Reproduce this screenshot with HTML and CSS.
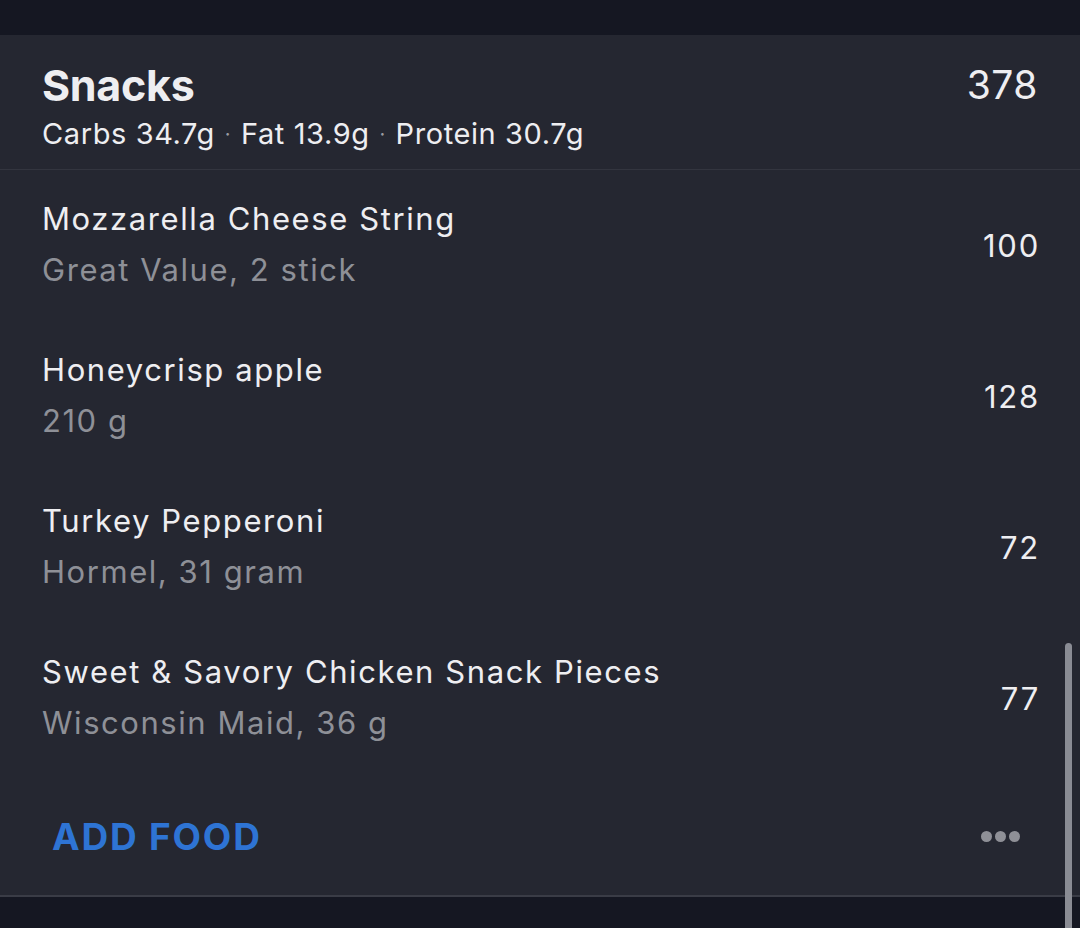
FILE: index.html
```html
<!DOCTYPE html>
<html>
<head>
<meta charset="utf-8">
<link rel="stylesheet" href="styles.css">
</head>
<body>
<div class="topbar"></div>
<section class="card">
  <header class="head">
    <div class="head-left">
      <h1 class="title">Snacks</h1>
      <div class="macros">Carbs 34.7g <span class="dot">·</span> Fat 13.9g <span class="dot">·</span> Protein 30.7g</div>
    </div>
    <div class="total">378</div>
  </header>
  <ul class="items">
    <li class="item">
      <div class="info"><div class="name">Mozzarella Cheese String</div><div class="sub">Great Value, 2 stick</div></div>
      <div class="cal">100</div>
    </li>
    <li class="item">
      <div class="info"><div class="name">Honeycrisp apple</div><div class="sub">210 g</div></div>
      <div class="cal">128</div>
    </li>
    <li class="item">
      <div class="info"><div class="name">Turkey Pepperoni</div><div class="sub">Hormel, 31 gram</div></div>
      <div class="cal">72</div>
    </li>
    <li class="item">
      <div class="info"><div class="name">Sweet &amp; Savory Chicken Snack Pieces</div><div class="sub">Wisconsin Maid, 36 g</div></div>
      <div class="cal">77</div>
    </li>
  </ul>
  <footer class="foot">
    <span class="add">ADD FOOD</span>
    <span class="more"><i></i><i></i><i></i></span>
  </footer>
</section>
<div class="scrollbar"></div>
</body>
</html>
```
FILE: styles.css
```css
html, body {
  margin: 0;
  padding: 0;
  background: #151722;
  height: 928px;
  overflow: hidden;
  font-family: Inter, "Noto Sans", sans-serif;
  color: #eeeef1;
}
.topbar { height: 35px; background: #151722; }
.card {
  background: #252731;
  border-bottom: 2px solid #3a3c46;
}
.head {
  display: flex;
  justify-content: space-between;
  align-items: flex-start;
  padding: 0 42px 0 42px;
  height: 134px;
  border-bottom: 1px solid #33353f;
}
.title {
  margin: 0;
  font-size: 43px;
  font-weight: 700;
  line-height: 52px;
  padding-top: 24px;
  letter-spacing: -0.3px;
}
.macros {
  font-size: 29px;
  line-height: 36px;
  margin-top: 5px;
  letter-spacing: 0.6px;
}
.dot { color: #9a9ba2; font-size: 20px; vertical-align: 3px; margin: 0 1px; }
.total {
  font-size: 39px;
  line-height: 52px;
  padding-top: 24px;
  letter-spacing: 0.5px;
}
.items { list-style: none; margin: 0; padding: 0; }
.item {
  height: 151px;
  display: flex;
  align-items: center;
  justify-content: space-between;
  padding: 0 42px;
}
.info { margin-top: -4px; }
.name { font-size: 31px; line-height: 51px; letter-spacing: 1.6px; }
.sub { font-size: 31px; line-height: 51px; color: #8e9097; letter-spacing: 1.55px; }
.cal { font-size: 31px; letter-spacing: 1.8px; margin-right: -2px; }
.foot {
  height: 121px;
  display: flex;
  align-items: center;
  justify-content: space-between;
  padding: 4px 60px 0 52px;
  box-sizing: border-box;
}
.add {
  color: #2e74d4;
  font-weight: 700;
  font-size: 37px;
  letter-spacing: 1.8px;
}
.more { display: flex; gap: 3px; }
.more i { width: 11px; height: 11px; border-radius: 50%; background: #8f9097; display: block; }
.scrollbar {
  position: fixed;
  left: 1065px;
  top: 643px;
  width: 7px;
  height: 300px;
  border-radius: 4px;
  background: #8a8c94;
}
```
